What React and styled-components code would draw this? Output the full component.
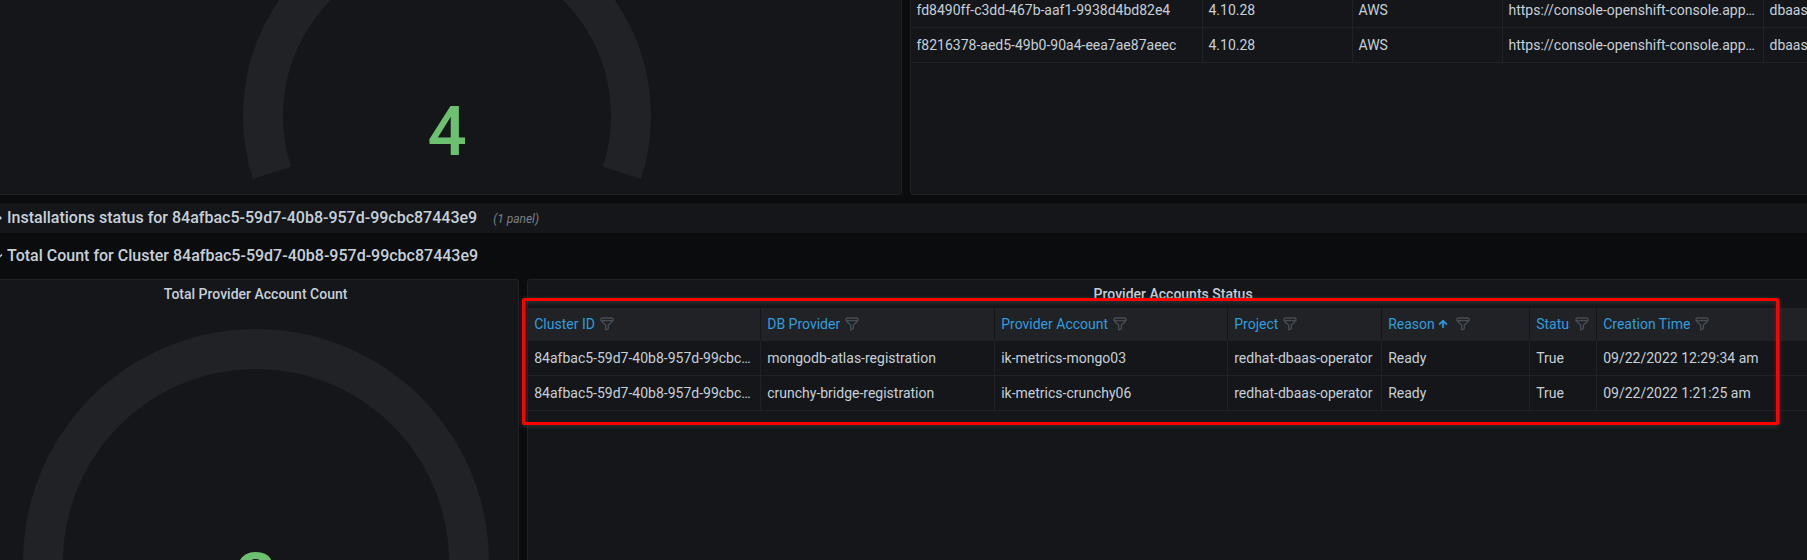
import React from "react";
import styled, { createGlobalStyle } from "styled-components";

const GlobalStyle = createGlobalStyle`
  body {
    margin: 0;
    overflow: hidden;
    background: #0b0c0e;
    color: #c7d0d9;
    font-family: Roboto, "Liberation Sans", sans-serif;
    font-size: 14px;
    line-height: 20px;
  }

  * {
    box-sizing: border-box;
  }
`;

const Page = styled.main`
  height: 100vh;
  overflow: hidden;
`;

// the board is wider than the window and scrolled a little past its first rows
const Board = styled.div`
  display: flex;
  flex-direction: column;
  gap: 8px;
  margin: -8px -12px 0 -8px;
`;

const PanelRow = styled.div`
  display: grid;
  grid-template-columns: repeat(24, minmax(0, 1fr));
  gap: 8px;
`;

const Panel = styled.section`
  position: relative;
  display: flex;
  flex-direction: column;
  justify-content: ${(props) => (props.$end ? "flex-end" : "flex-start")};
  grid-column: span ${(props) => props.$span};
  height: ${(props) => props.$height}px;
  border: 1px solid #202226;
  border-radius: 3px;
  background: #141619;
`;

const PanelTitle = styled.h2`
  margin: 0;
  padding: 4px 0;
  font-size: 14px;
  font-weight: 500;
  line-height: 20px;
  text-align: center;
`;

const GaugeBox = styled.div`
  display: flex;
  flex-shrink: 0;
  justify-content: center;
  padding: ${(props) => (props.$titled ? "21px 0 0" : "0 0 15px")};
`;

const GaugeValue = styled.text`
  fill: #6ec071;
  font-weight: 500;
  text-anchor: middle;
`;

const RowHeader = styled.button`
  display: flex;
  align-items: center;
  width: 100%;
  height: 30px;
  padding: 0;
  border: 0;
  background: ${(props) => (props.$collapsed ? "#141619" : "transparent")};
  color: #c7d0d9;
  font-family: inherit;
  font-size: 16px;
  font-weight: 500;
  line-height: 20px;
  text-align: left;

  svg {
    flex-shrink: 0;
    margin-right: 3px;
  }
`;

const PanelCount = styled.span`
  padding: 2px 0 0 16px;
  color: #7b8087;
  font-size: 12px;
  font-style: italic;
  font-weight: 400;
`;

const Table = styled.table`
  width: 100%;
  table-layout: fixed;
  border-collapse: separate;
  border-spacing: 0;
`;

const HeadCell = styled.th`
  height: 33px;
  padding: 0 6px 2px;
  border-right: 1px solid #141619;
  background: #202226;
  color: #329ddf;
  font-weight: 400;
  text-align: left;

  &:last-child {
    border-right: 0;
  }
`;

const HeadContent = styled.div`
  display: flex;
  align-items: center;
`;

const SortButton = styled.button`
  display: flex;
  align-items: center;
  min-width: 0;
  overflow: hidden;
  padding: 0;
  border: 0;
  background: none;
  color: inherit;
  font: inherit;
  line-height: 20px;
  white-space: nowrap;
`;

const FilterButton = styled.button`
  display: flex;
  flex-shrink: 0;
  padding: 0 0 0 4px;
  border: 0;
  background: none;
  color: #464c54;
`;

const Cell = styled.td`
  height: 35px;
  padding: 0 6px;
  overflow: hidden;
  border-right: 1px solid #202226;
  border-bottom: 1px solid #202226;
  text-overflow: ellipsis;
  white-space: nowrap;

  &:last-child {
    border-right: 0;
  }
`;

const Highlight = styled.div`
  position: absolute;
  top: 18px;
  right: 39px;
  left: -6px;
  height: 127px;
  border: 3px solid #ff0000;
  border-radius: 2px;
  box-shadow: 0 1px 4px 1px rgba(70, 74, 70, 0.5), inset 0 2px 4px rgba(70, 74, 70, 0.5);
  pointer-events: none;
`;

const CLUSTER = "84afbac5-59d7-40b8-957d-99cbc87443e9";

const clusterWidths = [292, 150, 150, 261, null];

const clusters = [
  ["fd8490ff-c3dd-467b-aaf1-9938d4bd82e4", "4.10.28", "AWS", "https://console-openshift-console.apps.cluster", "dbaas"],
  ["f8216378-aed5-49b0-90a4-eea7ae87aeec", "4.10.28", "AWS", "https://console-openshift-console.apps.cluster", "dbaas"],
];

const accountColumns = [
  { name: "Cluster ID", width: 233 },
  { name: "DB Provider", width: 234 },
  { name: "Provider Account", width: 233 },
  { name: "Project", width: 154 },
  { name: "Reason", width: 148, sorted: true },
  { name: "Status", width: 67 },
  { name: "Creation Time", width: null },
];

const accounts = [
  [CLUSTER, "mongodb-atlas-registration", "ik-metrics-mongo03", "redhat-dbaas-operator", "Ready", "True", "09/22/2022 12:29:34 am"],
  [CLUSTER, "crunchy-bridge-registration", "ik-metrics-crunchy06", "redhat-dbaas-operator", "Ready", "True", "09/22/2022 1:21:25 am"],
];

const FilterIcon = () => (
  <svg width="16" height="16" viewBox="0 0 24 24" fill="currentColor" aria-hidden="true">
    <path d="M19,2H5A3,3,0,0,0,2,5V6.17a3,3,0,0,0,.25,1.2l0,.06a2.81,2.81,0,0,0,.59.86L9,14.41V21a1,1,0,0,0,.47.85A1,1,0,0,0,10,22a1,1,0,0,0,.45-.11l4-2A1,1,0,0,0,15,19V14.41l6.12-6.12a2.81,2.81,0,0,0,.59-.86l0-.06A3,3,0,0,0,22,6.17V5A3,3,0,0,0,19,2ZM13.29,13.29A1,1,0,0,0,13,14v4.38l-2,1V14a1,1,0,0,0-.29-.71L5.41,8H18.59ZM20,6H4V5A1,1,0,0,1,5,4H19a1,1,0,0,1,1,1Z" />
  </svg>
);

const ArrowUp = () => (
  <svg width="16" height="16" viewBox="0 0 24 24" fill="currentColor" stroke="currentColor" strokeWidth="0.8" aria-hidden="true">
    <path d="M17.71,11.29l-5-5a1,1,0,0,0-.33-.21,1,1,0,0,0-.76,0,1,1,0,0,0-.33.21l-5,5a1,1,0,0,0,1.42,1.42L11,9.41V17a1,1,0,0,0,2,0V9.41l3.29,3.3a1,1,0,0,0,1.42,0A1,1,0,0,0,17.71,11.29Z" />
  </svg>
);

const Chevron = ({ open }) => (
  <svg width="12" height="12" viewBox="0 0 12 12" fill="none" stroke="currentColor" strokeWidth="1.4" aria-hidden="true">
    <path d={open ? "M2 4.5 L6 8.5 L10 4.5" : "M5 2 L9 6 L5 10"} />
  </svg>
);

const Gauge = ({ radius, value, titled }) => {
  // the arc ends 18 degrees below the horizontal on both sides
  const angle = Math.PI / 10;
  const middle = radius - 20;
  const dx = middle * Math.cos(angle);
  const dy = middle * Math.sin(angle);
  const height = Math.round(radius * (1 + Math.sin(angle)));

  return (
    <GaugeBox $titled={titled}>
      <svg width={radius * 2} height={height} overflow="visible" role="img" aria-label={`Gauge: ${value}`}>
        <path
          d={`M ${radius - dx} ${radius + dy} A ${middle} ${middle} 0 1 1 ${radius + dx} ${radius + dy}`}
          fill="none"
          stroke="#202226"
          strokeWidth="40"
        />
        <GaugeValue x={radius} y={Math.round(radius * 1.2) - 2} fontSize={Math.round(radius / 4) + 18}>
          {value}
        </GaugeValue>
      </svg>
    </GaugeBox>
  );
};

const Columns = ({ widths }) => (
  <colgroup>
    {widths.map((width, i) => (
      <col key={i} width={width || undefined} />
    ))}
  </colgroup>
);

const Rows = ({ rows }) => (
  <tbody>
    {rows.map((row) => (
      <tr key={row.join()}>
        {row.map((text, i) => (
          <Cell key={i}>{text}</Cell>
        ))}
      </tr>
    ))}
  </tbody>
);

const App = () => (
  <Page>
    <GlobalStyle />
    <Board>
      <PanelRow>
        <Panel $span={12} $height={203} $end>
          <Gauge radius={204} value="4" />
        </Panel>
        <Panel $span={12} $height={203}>
          <Table>
            <Columns widths={clusterWidths} />
            <Rows rows={clusters} />
          </Table>
        </Panel>
      </PanelRow>

      <RowHeader $collapsed aria-expanded="false">
        <Chevron />
        Installations status for {CLUSTER}
        <PanelCount>(1 panel)</PanelCount>
      </RowHeader>
      <RowHeader aria-expanded="true">
        <Chevron open />
        Total Count for Cluster {CLUSTER}
      </RowHeader>

      <PanelRow>
        <Panel $span={7} $height={373}>
          <PanelTitle>Total Provider Account Count</PanelTitle>
          <Gauge radius={233} value="2" titled />
        </Panel>
        <Panel $span={17} $height={373}>
          <PanelTitle>Provider Accounts Status</PanelTitle>
          <Table>
            <Columns widths={accountColumns.map((column) => column.width)} />
            <thead>
              <tr>
                {accountColumns.map(({ name, sorted }) => (
                  <HeadCell key={name} aria-sort={sorted ? "ascending" : undefined}>
                    <HeadContent>
                      <SortButton>
                        {name}
                        {sorted && <ArrowUp />}
                      </SortButton>
                      <FilterButton aria-label={`Filter ${name}`}>
                        <FilterIcon />
                      </FilterButton>
                    </HeadContent>
                  </HeadCell>
                ))}
              </tr>
            </thead>
            <Rows rows={accounts} />
          </Table>
          <Highlight />
        </Panel>
      </PanelRow>
    </Board>
  </Page>
);

export default App;
